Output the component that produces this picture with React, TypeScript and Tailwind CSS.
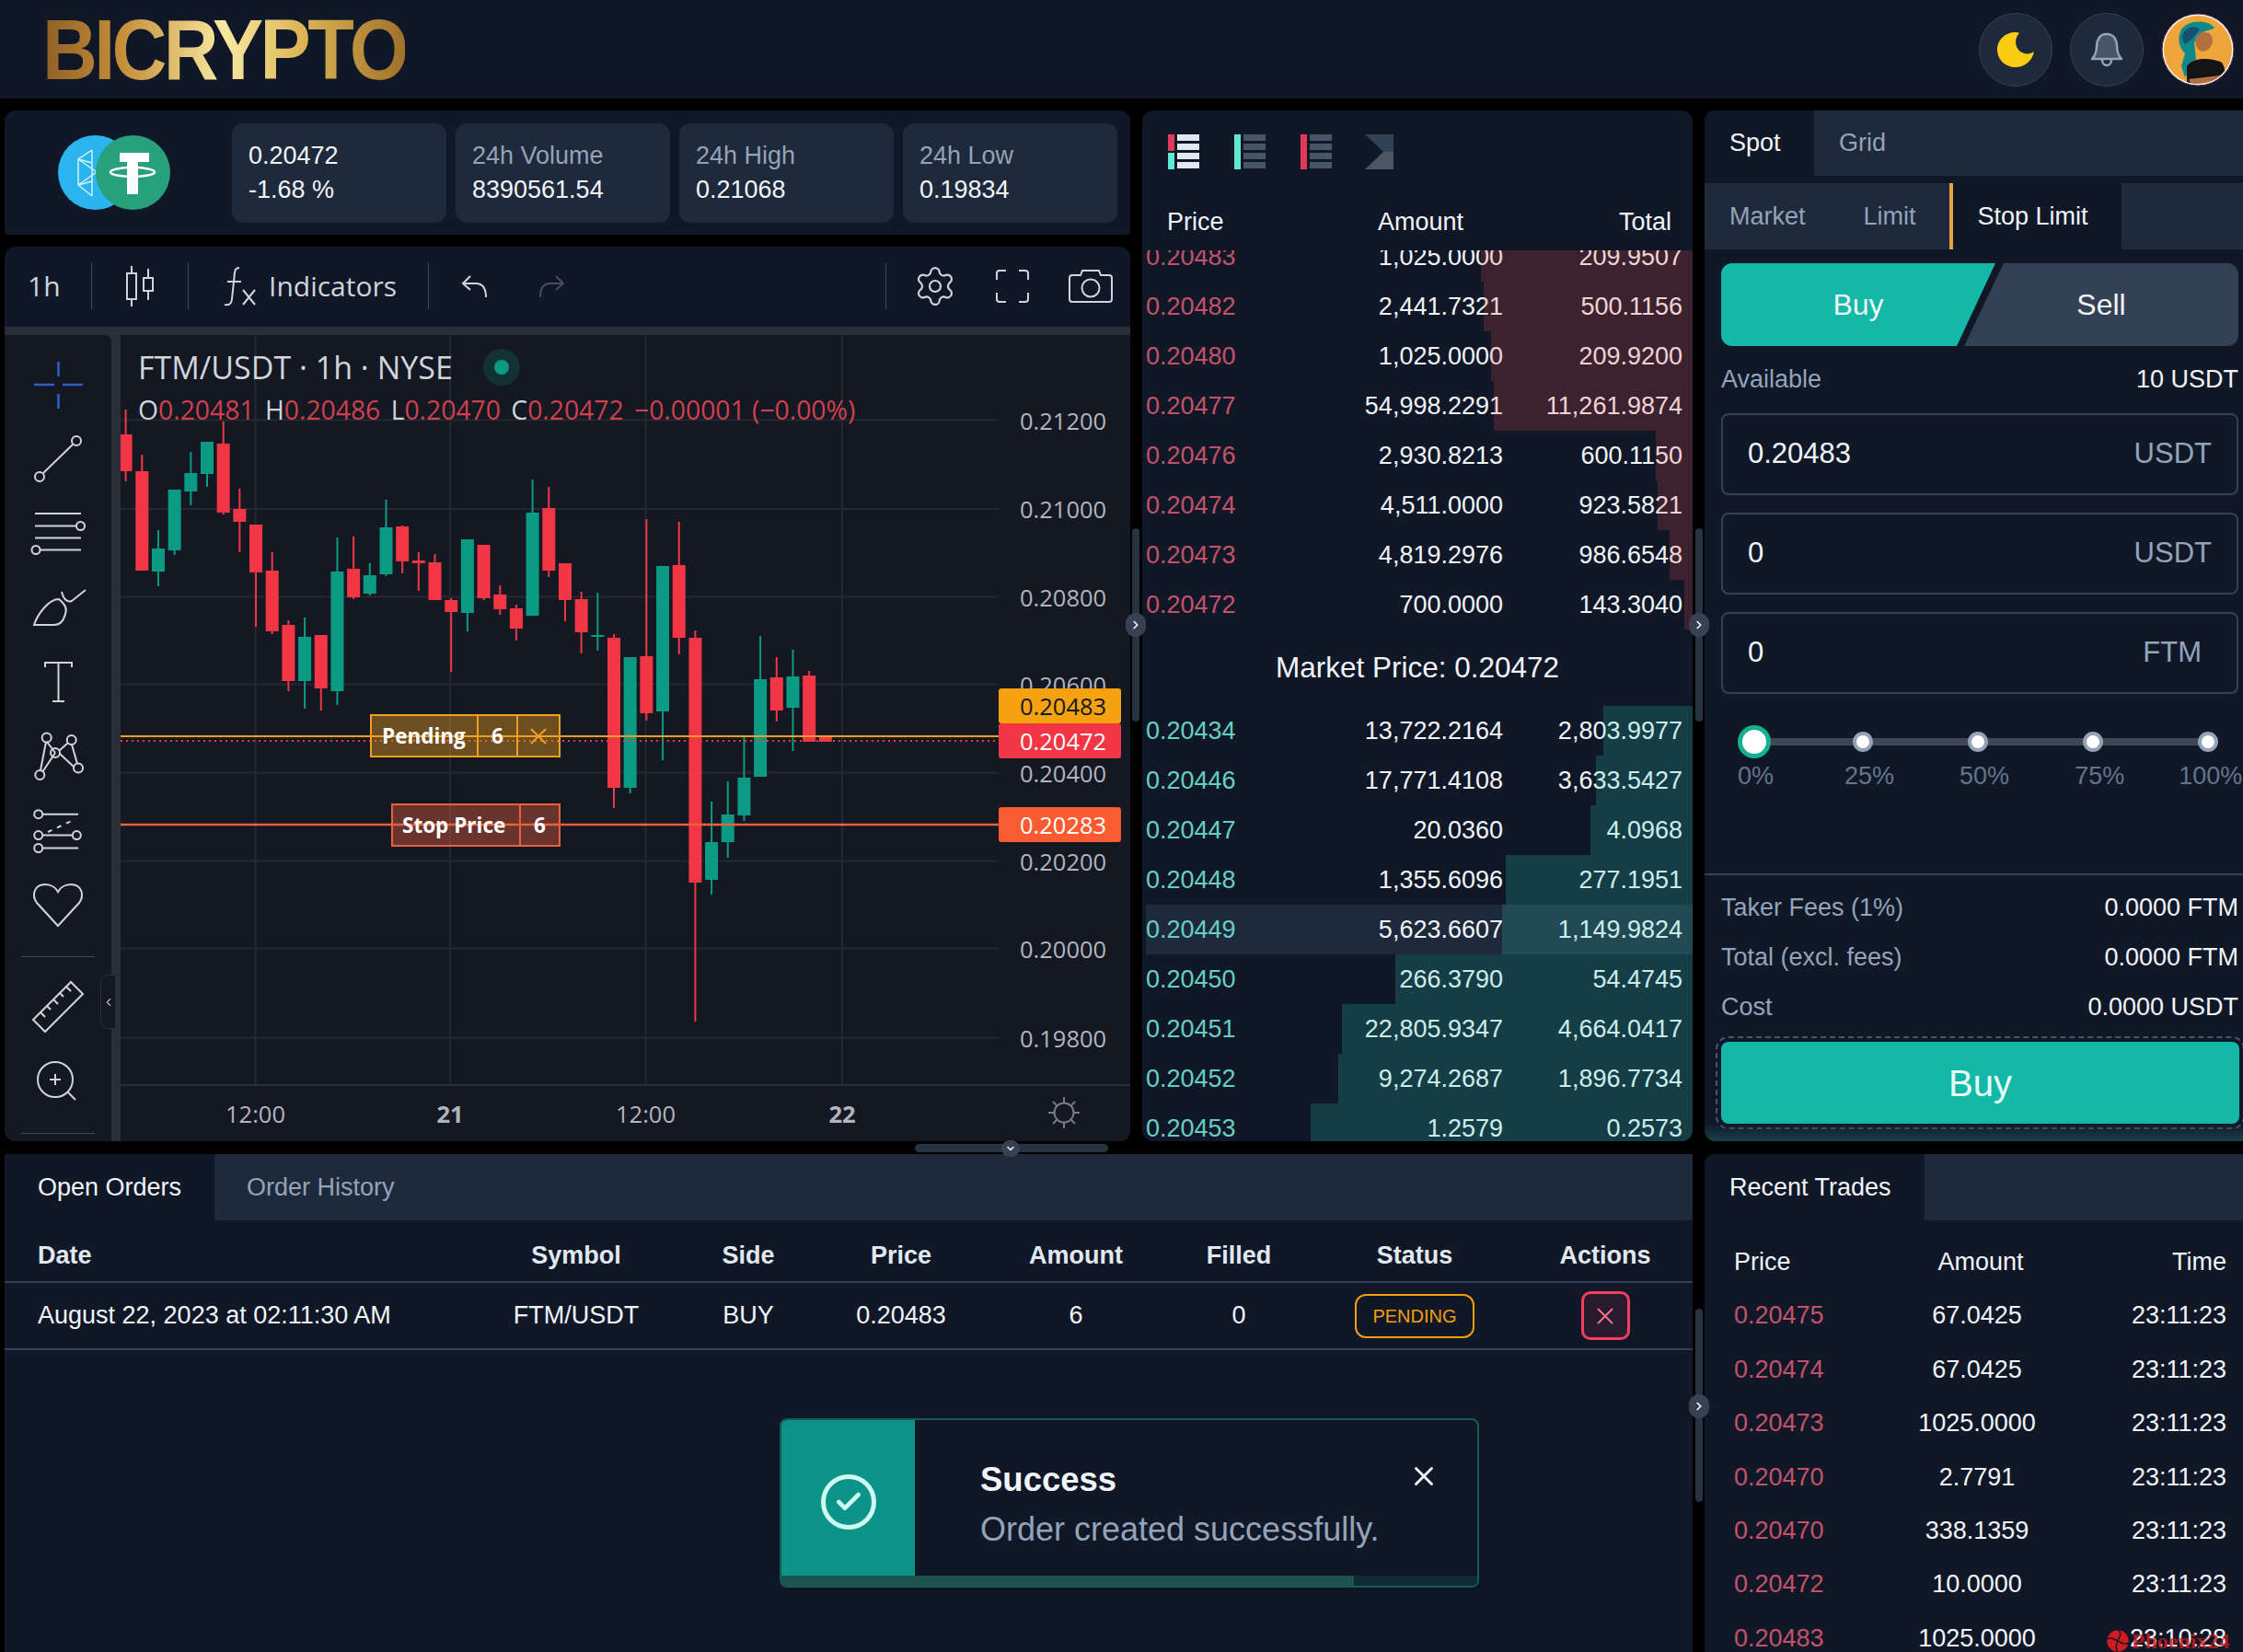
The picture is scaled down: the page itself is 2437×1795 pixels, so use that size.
import { Check, ChevronDown, ChevronLeft, ChevronRight, Settings, X } from "lucide-react";

const asks = [
  ["0.20483", "1,025.0000", "209.9507", 230],
  ["0.20482", "2,441.7321", "500.1156", 227],
  ["0.20480", "1,025.0000", "209.9200", 219],
  ["0.20477", "54,998.2291", "11,261.9874", 216],
  ["0.20476", "2,930.8213", "600.1150", 40],
  ["0.20474", "4,511.0000", "923.5821", 38],
  ["0.20473", "4,819.2976", "986.6548", 25],
  ["0.20472", "700.0000", "143.3040", 9],
] as const;

const bids = [
  ["0.20434", "13,722.2164", "2,803.9977", 97],
  ["0.20446", "17,771.4108", "3,633.5427", 105],
  ["0.20447", "20.0360", "4.0968", 111],
  ["0.20448", "1,355.6096", "277.1951", 203],
  ["0.20449", "5,623.6607", "1,149.9824", 207],
  ["0.20450", "266.3790", "54.4745", 323],
  ["0.20451", "22,805.9347", "4,664.0417", 381],
  ["0.20452", "9,274.2687", "1,896.7734", 385],
  ["0.20453", "1.2579", "0.2573", 415],
] as const;

const trades = [
  ["0.20475", "67.0425", "23:11:23"],
  ["0.20474", "67.0425", "23:11:23"],
  ["0.20473", "1025.0000", "23:11:23"],
  ["0.20470", "2.7791", "23:11:23"],
  ["0.20470", "338.1359", "23:11:23"],
  ["0.20472", "10.0000", "23:11:23"],
  ["0.20483", "1025.0000", "23:10:28"],
];

// up, wick top, body top, body bottom, wick bottom
const candles: [number, number, number, number, number][] = [
  [0, 445, 472, 512, 523], [0, 494, 512, 620, 620], [1, 576, 596, 621, 637], [1, 532, 532, 598, 603],
  [1, 491, 514, 534, 549], [1, 480, 480, 515, 529], [0, 458, 482, 557, 559], [0, 531, 553, 567, 600],
  [0, 570, 570, 622, 681], [0, 600, 620, 686, 689], [0, 674, 679, 740, 751], [1, 671, 692, 740, 770],
  [0, 690, 690, 748, 772], [1, 584, 621, 751, 766], [0, 583, 618, 649, 651], [1, 612, 625, 645, 647],
  [1, 543, 573, 624, 626], [0, 571, 572, 610, 623], [0, 600, 609, 612, 642], [0, 602, 611, 652, 652],
  [0, 650, 652, 665, 730], [1, 586, 586, 666, 686], [0, 592, 592, 650, 652], [0, 636, 646, 662, 668],
  [0, 657, 661, 683, 696], [1, 521, 557, 669, 669], [0, 529, 552, 620, 627], [0, 612, 612, 652, 675],
  [0, 643, 651, 687, 710], [1, 644, 690, 692, 707], [0, 689, 693, 856, 878], [1, 714, 714, 856, 862],
  [0, 564, 713, 775, 783], [1, 615, 615, 773, 826], [0, 567, 614, 693, 711], [0, 685, 693, 959, 1110],
  [1, 871, 915, 956, 972], [1, 849, 885, 915, 932], [1, 801, 845, 886, 892], [1, 691, 738, 844, 844],
  [0, 714, 736, 772, 784], [1, 706, 735, 769, 816], [0, 729, 734, 806, 806], [0, 800, 801, 806, 806],
];

const priceLevels = [
  ["0.21200", 456.5], ["0.21000", 553], ["0.20800", 648.5], ["0.20600", 743.6],
  ["0.20400", 839.5], ["0.20200", 935.5], ["0.20000", 1030.6], ["0.19800", 1127.5],
] as const;

const timeLabels = [["12:00", 277.5, false], ["21", 489, true], ["12:00", 701.5, false], ["22", 915, true]] as const;

const Chart = () => (
  <svg width="1097" height="876" viewBox="131 364 1097 876" className="block font-['Open_Sans',sans-serif]">
    {priceLevels.map(([, y]) => (
      <line key={y} x1="131" x2="1085" y1={y} y2={y} stroke="#242833" strokeWidth="2" />
    ))}
    {timeLabels.map(([, x]) => (
      <line key={x} x1={x} x2={x} y1="364" y2="1179" stroke="#242833" strokeWidth="2" />
    ))}
    {candles.map(([up, top, bodyTop, bodyBottom, bottom], i) => {
      const x = 136.6 + i * 17.68;
      const color = up ? "#0b9b84" : "#f23645";
      return (
        <g key={i} fill={color}>
          <rect x={x - 1} y={top} width="2" height={bottom - top} />
          <rect x={x - 7} y={bodyTop} width="14" height={Math.max(bodyBottom - bodyTop, 2)} />
        </g>
      );
    })}
    <line x1="131" x2="1085" y1="800" y2="800" stroke="#f0a01e" strokeWidth="2" />
    <line x1="131" x2="1085" y1="805" y2="805" stroke="#f23645" strokeWidth="2" strokeDasharray="2 4" />
    <line x1="131" x2="1085" y1="896" y2="896" stroke="#e8603c" strokeWidth="2.5" />
    {priceLevels.map(([label, y]) => (
      <text key={label} x="1108" y={y + 10} fontSize="25.5" fill="#b2b5be">{label}</text>
    ))}
    <rect x="1085" y="748" width="133" height="38" rx="3" fill="#f6a20f" />
    <text x="1108" y="777" fontSize="25.5" fill="#131722">0.20483</text>
    <rect x="1085" y="786" width="133" height="38" rx="3" fill="#f23645" />
    <text x="1108" y="815" fontSize="25.5" fill="#ffffff">0.20472</text>
    <rect x="1085" y="877" width="133" height="38" rx="3" fill="#fb5b31" />
    <text x="1108" y="906" fontSize="25.5" fill="#ffffff">0.20283</text>
    <line x1="131" x2="1228" y1="1179" y2="1179" stroke="#2a2e39" strokeWidth="2" />
    {timeLabels.map(([label, x, bold]) => (
      <text key={x} x={x} y="1219.5" textAnchor="middle" fontSize="25.5" fontWeight={bold ? 700 : 400} fill="#b2b5be">{label}</text>
    ))}
    <g stroke="#787b86" strokeWidth="2" fill="none">
      <circle cx="1156" cy="1209" r="10.5" />
      <path d="M1156 1192v6M1156 1220v6M1139 1209h6M1167 1209h6M1144 1197l4 4M1164 1217l4 4M1144 1221l4-4M1164 1201l4-4" />
    </g>
  </svg>
);

const ToolIcon = ({ children, className = "h-[81px]" }: { children: React.ReactNode; className?: string }) => (
  <div className={`flex items-center justify-center ${className}`}>
    <svg width="64" height="64" viewBox="0 0 64 64" fill="none" stroke="#d1d4dc" strokeWidth="2">
      {children}
    </svg>
  </div>
);

const LeftToolbar = () => (
  <div className="relative flex w-[116px] shrink-0 flex-col bg-[#141823] pt-[13px] rounded-tr-lg">
    <ToolIcon>
      <path d="M6 32H28M37 32H59M32.5 7V23M32.5 42V58" stroke="#2f5fc4" strokeWidth="2.5" />
    </ToolIcon>
    <ToolIcon>
      <path d="M16 47L48 16" />
      <circle cx="12" cy="51" r="5" />
      <circle cx="52" cy="12" r="5" />
    </ToolIcon>
    <ToolIcon>
      <path d="M7 10H57M7 23.5H52M7 36.5H57M13 49.5H57" />
      <circle cx="56.5" cy="23.5" r="4.5" />
      <circle cx="8" cy="49.5" r="4.5" />
    </ToolIcon>
    <ToolIcon>
      <path d="M6 50C10 38 22 22 33 22C40 28 42 32 40 38C38 46 34 50 28 50Z" />
      <path d="M36 14C38 22 42 26 47 24L62 12" />
    </ToolIcon>
    <ToolIcon>
      <path d="M18 15V10H47V15M32.5 10V52M26 52H39" />
    </ToolIcon>
    <ToolIcon>
      <path d="M20 15L29 27M19 15L13 46M29 27L15 48M33 25L43 16M47 18L53 39M34 28L49 42" />
      <circle cx="19.7" cy="10.5" r="5" />
      <circle cx="46.7" cy="13" r="5" />
      <circle cx="29" cy="27" r="5" />
      <circle cx="12.3" cy="51" r="5" />
      <circle cx="54" cy="43.5" r="5" />
    </ToolIcon>
    <ToolIcon>
      <path d="M15 12.7H54M15 35.6H48M15 49.5H54" />
      <path d="M21 32L51 18" strokeDasharray="5 6" />
      <circle cx="10.7" cy="12.7" r="4.5" />
      <circle cx="10.7" cy="35.6" r="4.5" />
      <circle cx="52.3" cy="35.6" r="4.5" />
      <circle cx="10.7" cy="49.5" r="4.5" />
    </ToolIcon>
    <ToolIcon>
      <path d="M32 53L9 28C3 20 6 8 18 8C25 8 30 12 32 16C34 12 39 8 46 8C58 8 61 20 55 28Z" />
    </ToolIcon>
    <div className="mx-[18px] mt-[14px] h-px bg-[#434651]" />
    <ToolIcon className="mt-[14px] h-[80px]">
      <path d="M5 46L46 5L59 18L18 59ZM13 38L18 43M20 31L24 35M27 24L32 29M34 17L38 21M41 10L46 15" />
    </ToolIcon>
    <ToolIcon className="h-[80px]">
      <circle cx="29" cy="31" r="19" />
      <path d="M42 44L51 53M23 31H35M29 25V37" />
    </ToolIcon>
    <div className="mx-[18px] mt-[17px] h-px bg-[#434651]" />
    <div className="absolute left-[104px] top-[695px] flex h-[59px] w-[16px] items-center justify-center rounded-l-lg border border-r-0 border-[#2a2e39] bg-[#141823]">
      <ChevronLeft size={14} color="#b2b5be" />
    </div>
  </div>
);

const ChartToolbar = () => (
  <div className="flex h-[87px] shrink-0 items-center pb-[2px] font-['Open_Sans',sans-serif] text-[#d1d4dc]">
    <span className="w-[94px] pl-[25px] text-[30px]">1h</span>
    <div className="h-[50px] w-px bg-[#434651]" />
    <div className="flex w-[104px] justify-center">
      <svg width="32" height="44" viewBox="0 0 32 44" fill="none" stroke="#d1d4dc" strokeWidth="2">
        <rect x="2" y="8" width="10" height="28" />
        <path d="M7 0V8M7 36V44M25 3V13M25 27V37" />
        <rect x="20" y="13" width="10" height="14" />
      </svg>
    </div>
    <div className="h-[50px] w-px bg-[#434651]" />
    <div className="flex w-[260px] items-center pl-[36px]">
      <svg width="38" height="44" viewBox="0 0 38 44" fill="none" stroke="#d1d4dc" strokeWidth="2">
        <path d="M19 2C14 2 14 6 13.500 12L11 36C10.500 41 8 43 3 42M6 17H21M23 26L36 42M36 26L23 42" />
      </svg>
      <span className="ml-[13px] text-[30px]">Indicators</span>
    </div>
    <div className="h-[50px] w-px bg-[#434651]" />
    <div className="flex w-[87px] justify-center pl-[12px]">
      <svg width="32" height="32" viewBox="0 0 32 32" fill="none" stroke="#d1d4dc" strokeWidth="2">
        <path d="M11 5L3 13L11 20M3 13H17C24 13 28 18 28 28" />
      </svg>
    </div>
    <div className="flex w-[91px] justify-center">
      <svg width="32" height="32" viewBox="0 0 32 32" fill="none" stroke="#4a4e5a" strokeWidth="2">
        <path d="M21 5L29 13L21 20M29 13H15C8 13 4 18 4 28" />
      </svg>
    </div>
    <div className="ml-[318px] h-[50px] w-px bg-[#434651]" />
    <Settings size={48} strokeWidth={1.1} color="#d1d4dc" className="ml-[29px]" />
    <svg width="38" height="38" viewBox="0 0 38 38" fill="none" stroke="#d1d4dc" strokeWidth="2" className="ml-[41px]">
      <path d="M12 2H5C3 2 2 3 2 5V12M26 2H33C35 2 36 3 36 5V12M36 26V33C36 35 35 36 33 36H26M12 36H5C3 36 2 35 2 33V26" />
    </svg>
    <svg width="48" height="38" viewBox="0 0 48 38" fill="none" stroke="#d1d4dc" strokeWidth="2" className="ml-[42px]">
      <path d="M4 7H13L15 2H33L35 7H44C46 7 47 8 47 10V33C47 35 46 36 44 36H4C2 36 1 35 1 33V10C1 8 2 7 4 7Z" />
      <circle cx="24" cy="21" r="9.500" />
    </svg>
  </div>
);

const TickerCard = ({ label, value, muted }: { label: string; value: string; muted?: boolean }) => (
  <div className="flex h-[108px] w-[233px] flex-col justify-center rounded-xl bg-[#1e293b] pl-[18px] text-[27px] leading-[37px]">
    <span className={muted ? "text-[#94a3b8]" : "text-[#f1f5f9]"}>{label}</span>
    <span className="text-[#f1f5f9]">{value}</span>
  </div>
);

const Ticker = () => (
  <div className="flex h-[135px] shrink-0 items-center rounded-t-xl rounded-b-sm bg-[#101828]">
    <svg width="122" height="81" viewBox="0 0 122 81" className="ml-[58px] mr-[67px] shrink-0">
      <circle cx="40.500" cy="40.500" r="40.500" fill="#2bb5ee" />
      <path d="M37 16L22 26V54L37 66M22 26L42 40M22 54L42 40M37 16V66M22 26L37 30M22 54L37 50" stroke="#d7f1fb" strokeWidth="1.500" fill="none" />
      <circle cx="81.500" cy="40.500" r="40.500" fill="#26a17b" />
      <path d="M67 19H99V29H87V64H75V29H67Z" fill="#ffffff" />
      <ellipse cx="81" cy="40" rx="24" ry="5" fill="none" stroke="#ffffff" strokeWidth="2.500" />
    </svg>
    <div className="flex gap-[10px]">
      <TickerCard label="0.20472" value="-1.68 %" />
      <TickerCard label="24h Volume" value="8390561.54" muted />
      <TickerCard label="24h High" value="0.21068" muted />
      <TickerCard label="24h Low" value="0.19834" muted />
    </div>
  </div>
);

const ChartPanel = () => (
  <div className="mt-[13px] flex flex-1 flex-col overflow-hidden rounded-xl rounded-b-xl bg-[#101828]">
    <ChartToolbar />
    <div className="h-[9px] shrink-0 bg-[#2a2e39]" />
    <div className="flex flex-1 bg-[#2a2e39]">
      <LeftToolbar />
      <div className="relative ml-[10px] flex-1 bg-[#141823]">
        <Chart />
        <div className="absolute left-[19px] top-[13px] flex items-center font-['Open_Sans',sans-serif]">
          <span className="text-[34px] leading-[44px] text-[#d1d4dc]">FTM/USDT · 1h · NYSE</span>
          <span className="ml-[33px] flex h-[40px] w-[40px] items-center justify-center rounded-full bg-[#0b9b84]/20">
            <span className="h-[16px] w-[16px] rounded-full bg-[#0b9b84]" />
          </span>
        </div>
        <div className="absolute left-[19px] top-[62px] whitespace-nowrap font-['Open_Sans',sans-serif] text-[28.300px] leading-[38px] text-[#d0404e]">
          <span className="text-[#d1d4dc]">O</span>0.20481 <span className="ml-1 text-[#d1d4dc]">H</span>0.20486 <span className="ml-1 text-[#d1d4dc]">L</span>0.20470 <span className="ml-1 text-[#d1d4dc]">C</span>0.20472 <span className="ml-1">−0.00001 (−0.00%)</span>
        </div>
        <div className="absolute left-[271px] top-[412px] flex h-[47px] w-[207px] items-center border-2 border-[#f0a01e] bg-[#f0a01e]/40 font-['Open_Sans',sans-serif] text-[22.500px] font-bold text-white">
          <span className="w-[114px] pl-[11px]">Pending</span>
          <span className="flex h-full w-[45px] items-center justify-center border-x-2 border-[#f0a01e]">6</span>
          <span className="flex flex-1 items-center justify-center">
            <X size={30} strokeWidth={1.6} color="#f0a01e" />
          </span>
        </div>
        <div className="absolute left-[294px] top-[509px] flex h-[47px] w-[184px] items-center border-2 border-[#e8603c] bg-[#e8603c]/40 font-['Open_Sans',sans-serif] text-[22.500px] font-bold text-white">
          <span className="w-[137px] pl-[10px]">Stop Price</span>
          <span className="flex h-full flex-1 items-center justify-center border-l-2 border-[#e8603c]">6</span>
        </div>
      </div>
    </div>
  </div>
);

const BookRow = ({ row, side, active }: { row: readonly [string, string, string, number]; side: "ask" | "bid"; active?: boolean }) => (
  <div className={`relative ml-[4px] grid h-[54px] shrink-0 grid-cols-[200px_188px_195px] items-center text-[27px] text-[#f1f5f9] ${active ? "bg-[#1e293b]" : ""}`}>
    <span className={side === "ask" ? "text-[#c2526a]" : "text-[#66cfc1]"}>{row[0]}</span>
    <span className="text-right">{row[1]}</span>
    <span className="text-right">{row[2]}</span>
    <div
      className={`absolute inset-y-0 right-0 ${side === "ask" ? "bg-[#ef4444]/20" : "bg-[#2dd4bf]/20"}`}
      style={{ width: row[3] }}
    />
  </div>
);

const BookIcon = ({ bar, lines }: { bar: "both" | "green" | "red"; lines: string }) => (
  <svg width="34" height="38" viewBox="0 0 34 38">
    {bar === "both" ? (
      <>
        <rect width="7" height="18" fill="#e0395a" />
        <rect y="20" width="7" height="18" fill="#5eead4" />
      </>
    ) : (
      <rect width="7" height="38" fill={bar === "green" ? "#5eead4" : "#e0395a"} />
    )}
    {[0, 10, 20, 30].map((y) => (
      <rect key={y} x="10" y={y} width="24" height="7" fill={lines} />
    ))}
  </svg>
);

const OrderBook = () => (
  <div className="ml-[13px] flex w-[598px] shrink-0 flex-col overflow-hidden rounded-xl bg-[#101828]">
    <div className="flex h-[90px] shrink-0 items-center pl-[28px]">
      <BookIcon bar="both" lines="#e2e8f0" />
      <div className="ml-[38px]"><BookIcon bar="green" lines="#475569" /></div>
      <div className="ml-[38px]"><BookIcon bar="red" lines="#475569" /></div>
      <svg width="31" height="38" viewBox="0 0 31 38" className="ml-[36px]">
        <path d="M0 0H31V19H20Z" fill="#334155" />
        <path d="M20 19H31V38H0Z" fill="#4b5563" />
      </svg>
    </div>
    <div className="grid h-[62px] shrink-0 grid-cols-[229px_120px_199px] items-center pl-[27px] text-[27px] text-[#f1f5f9]">
      <span>Price</span>
      <span>Amount</span>
      <span className="text-right">Total</span>
    </div>
    <div className="flex h-[412px] shrink-0 flex-col justify-end overflow-hidden">
      {asks.map((row) => <BookRow key={row[0]} row={row} side="ask" />)}
    </div>
    <div className="flex h-[83px] shrink-0 items-center justify-center text-[31.500px] text-[#f1f5f9]">Market Price: 0.20472</div>
    <div className="flex min-h-0 flex-1 flex-col overflow-hidden">
      {bids.map((row) => <BookRow key={row[0]} row={row} side="bid" active={row[0] === "0.20449"} />)}
    </div>
  </div>
);

const Field = ({ value, unit, unitClass = "" }: { value: string; unit: string; unitClass?: string }) => (
  <div className="flex h-[89px] items-center justify-between rounded-lg border-2 border-[#334155] px-[27px] text-[31px]">
    <span className="text-[#f1f5f9]">{value}</span>
    <span className={`text-[#94a3b8] ${unitClass}`}>{unit}</span>
  </div>
);

const TradeForm = () => (
  <div className="ml-[13px] flex flex-1 flex-col overflow-hidden rounded-tl-xl rounded-bl-xl bg-[#101828] text-[27px]">
    <div className="flex h-[71px] shrink-0 bg-[#1e293b]">
      <div className="flex w-[119px] items-center rounded-tl-xl bg-[#101828] pl-[27px] text-[#f1f5f9]">Spot</div>
      <div className="flex items-center pl-[27px] text-[#94a3b8]">Grid</div>
    </div>
    <div className="mt-[8px] flex h-[72px] shrink-0 items-center bg-[#1e293b] text-[#94a3b8]">
      <span className="pl-[27px]">Market</span>
      <span className="pl-[63px]">Limit</span>
      <div className="ml-[36px] flex h-full w-[187px] items-center border-l-4 border-[#e8a33d] bg-[#101828] pl-[27px] text-[#f1f5f9]">Stop Limit</div>
    </div>
    <div className="ml-[18px] mr-[5px] mt-[15px] flex h-[90px] shrink-0 text-[32px] text-[#f1f5f9]">
      <div className="flex w-[298px] shrink-0 items-center justify-center rounded-l-xl bg-[#14b8a6] [clip-path:polygon(0_0,100%_0,calc(100%-42px)_100%,0_100%)]">Buy</div>
      <div className="-ml-[34px] flex flex-1 items-center justify-center rounded-r-xl bg-[#334155] [clip-path:polygon(43px_0,100%_0,100%_100%,0_100%)]">Sell</div>
    </div>
    <div className="ml-[18px] mr-[5px] mt-[18px] flex h-[37px] shrink-0 items-center justify-between">
      <span className="text-[#94a3b8]">Available</span>
      <span className="text-[#f1f5f9]">10 USDT</span>
    </div>
    <div className="ml-[18px] mr-[5px] mt-[18px] flex shrink-0 flex-col gap-[19px]">
      <Field value="0.20483" unit="USDT" />
      <Field value="0" unit="USDT" />
      <Field value="0" unit="FTM" unitClass="mr-[11px]" />
    </div>
    <div className="relative ml-[36px] mt-[34px] flex h-[36px] w-[522px] shrink-0 items-center">
      <div className="absolute inset-x-[18px] top-[14px] h-[8px] bg-[#3f4654]" />
      <span className="relative h-[36px] w-[36px] rounded-full border-[5px] border-[#14b08f] bg-white" />
      <span className="relative ml-[89px] h-[22px] w-[22px] rounded-full border-[4px] border-[#94a3b8] bg-white" />
      <span className="relative ml-[103px] h-[22px] w-[22px] rounded-full border-[4px] border-[#94a3b8] bg-white" />
      <span className="relative ml-[103px] h-[22px] w-[22px] rounded-full border-[4px] border-[#94a3b8] bg-white" />
      <span className="relative ml-[103px] h-[22px] w-[22px] rounded-full border-[4px] border-[#94a3b8] bg-white" />
    </div>
    <div className="ml-[36px] mt-[3px] flex h-[32px] shrink-0 items-center whitespace-nowrap text-[#64748b]">
      <span>0%</span>
      <span className="ml-[77px]">25%</span>
      <span className="ml-[71px]">50%</span>
      <span className="ml-[71px]">75%</span>
      <span className="ml-[59px]">100%</span>
    </div>
    <div className="mt-[90px] h-[2px] shrink-0 bg-[#334155]" />
    <div className="ml-[18px] mr-[5px] mt-[8px] shrink-0">
      <div className="flex h-[54px] items-center justify-between">
        <span className="text-[#94a3b8]">Taker Fees (1%)</span>
        <span className="text-[#f1f5f9]">0.0000 FTM</span>
      </div>
      <div className="flex h-[54px] items-center justify-between">
        <span className="text-[#94a3b8]">Total (excl. fees)</span>
        <span className="text-[#f1f5f9]">0.0000 FTM</span>
      </div>
      <div className="flex h-[54px] items-center justify-between">
        <span className="text-[#94a3b8]">Cost</span>
        <span className="text-[#f1f5f9]">0.0000 USDT</span>
      </div>
    </div>
    <div className="ml-[18px] mr-[4px] mt-[11px] flex h-[89px] shrink-0 items-center justify-center rounded-lg bg-[#14b8a6] text-[40px] text-[#e6fffa] outline-2 outline-offset-[4px] outline-[#475569] outline-dashed">Buy</div>
    <div className="min-h-0 flex-1 bg-gradient-to-b from-transparent to-[#1c3f48]" />
  </div>
);

const Tab = ({ label, active, className }: { label: string; active?: boolean; className: string }) => (
  <div className={`flex items-center ${active ? "bg-[#101828] text-[#f1f5f9]" : "text-[#94a3b8]"} ${className}`}>{label}</div>
);

const OrdersPanel = () => (
  <div className="relative w-[1834px] shrink-0 bg-[#101828] text-[27px]">
    <div className="flex h-[72px] bg-[#1e293b]">
      <Tab label="Open Orders" active className="w-[228px] pl-[36px]" />
      <Tab label="Order History" className="pl-[35px]" />
    </div>
    <div className="grid h-[68px] grid-cols-[516px_210px_164px_168px_212px_142px_240px_174px] items-center border-b-2 border-[#334155] pt-[11px] text-center font-bold text-[#e2e8f0]">
      <span className="pl-[36px] text-left">Date</span>
      <span>Symbol</span>
      <span>Side</span>
      <span>Price</span>
      <span>Amount</span>
      <span>Filled</span>
      <span>Status</span>
      <span>Actions</span>
    </div>
    <div className="grid h-[73px] grid-cols-[516px_210px_164px_168px_212px_142px_240px_174px] items-center border-b-2 border-[#334155] text-center text-[#f1f5f9]">
      <span className="pl-[36px] text-left">August 22, 2023 at 02:11:30 AM</span>
      <span>FTM/USDT</span>
      <span>BUY</span>
      <span>0.20483</span>
      <span>6</span>
      <span>0</span>
      <span className="flex justify-center">
        <span className="flex h-[48px] w-[130px] items-center justify-center rounded-xl border-2 border-[#f59e0b] text-[20px] text-[#f59e0b]">PENDING</span>
      </span>
      <span className="flex justify-center">
        <span className="flex h-[53px] w-[53px] items-center justify-center rounded-[10px] border-[3px] border-[#f43f5e] bg-[#f43f5e]/10">
          <X size={30} strokeWidth={1.6} className="text-[#f87189]" />
        </span>
      </span>
    </div>
    <div className="absolute left-[842px] top-[287px] flex h-[184px] w-[760px] flex-col overflow-hidden rounded-lg border-2 border-[#165a58] bg-[#101828] shadow-lg">
      <div className="flex flex-1">
        <div className="flex w-[145px] items-center justify-center bg-[#0d9488] pt-[8px]">
          <span className="flex h-[60px] w-[60px] items-center justify-center rounded-full border-[5px] border-[#ccfbf1]">
            <Check size={32} strokeWidth={3.5} className="text-[#ccfbf1]" />
          </span>
        </div>
        <div className="relative flex-1 pl-[71px] pt-[39px]">
          <div className="text-[36.500px] font-bold leading-[52px] text-[#f1f5f9]">Success</div>
          <div className="mt-[2px] text-[36px] leading-[52px] text-[#94a3b8]">Order created successfully.</div>
          <X size={34} strokeWidth={2} className="absolute right-[41px] top-[44px] text-[#f1f5f9]" />
        </div>
      </div>
      <div className="h-[11px] shrink-0 bg-[#0f2a33]">
        <div className="h-full w-[622px] bg-[#1d544f]" />
      </div>
    </div>
  </div>
);

const TradesPanel = () => (
  <div className="relative ml-[13px] flex-1 overflow-hidden rounded-tl-xl bg-[#101828] text-[27px]">
    <div className="flex h-[72px] bg-[#1e293b]">
      <Tab label="Recent Trades" active className="w-[239px] rounded-tl-xl pl-[27px]" />
    </div>
    <div className="mt-[16px] pl-[32px]">
      <div className="grid h-[58.400px] grid-cols-[116px_296px_123px] items-center text-[#f1f5f9]">
        <span>Price</span>
        <span className="pl-[8px] text-center">Amount</span>
        <span className="text-right">Time</span>
      </div>
      {trades.map((t, i) => (
        <div key={i} className="grid h-[58.400px] grid-cols-[116px_296px_123px] items-center whitespace-nowrap text-[#f1f5f9]">
          <span className="text-[#c2526a]">{t[0]}</span>
          <span className="text-center">{t[1]}</span>
          <span className="text-right">{t[2]}</span>
        </div>
      ))}
    </div>
    <div className="absolute left-[436px] top-[511px] flex items-center text-[#d01c1f]">
      <svg width="26" height="26" viewBox="0 0 26 26" fill="currentColor" stroke="#101828" strokeWidth="1.500">
        <circle cx="13" cy="13" r="12.500" />
        <path d="M13 1C22 7 6 14 13 25M1 11C9 6 17 20 25 15" fill="none" />
      </svg>
      <span className="ml-[2px] font-['Liberation_Serif',serif] text-[24px] font-bold opacity-80">Phoenix24</span>
    </div>
  </div>
);

const Header = () => (
  <div className="flex h-[107px] shrink-0 items-center justify-between bg-[#101828] pl-[46px] pr-[9px]">
    <div className="origin-left scale-x-[.9] bg-[linear-gradient(90deg,#8f5f26,#c48f3a_22%,#f8e9a2_50%,#dcb455_72%,#a0712a_100%)] bg-clip-text text-[92px] font-bold leading-[92px] tracking-[-4px] text-transparent">
      BICRYPTO
    </div>
    <div className="flex items-center gap-[19px]">
      <div className="flex h-[80px] w-[80px] items-center justify-center rounded-full border border-[#334155] bg-[#1e293b]">
        <svg width="40" height="38" viewBox="0 0 40 38">
          <path d="M20 0C9 0 0 8 0 19C0 30 9 38 20 38C30 38 38 31 40 21C35 25 27 24 23 19C19 14 19 6 24 1C22 0 21 0 20 0Z" fill="#facc15" />
        </svg>
      </div>
      <div className="flex h-[80px] w-[80px] items-center justify-center rounded-full border border-[#334155] bg-[#1e293b]">
        <svg width="36" height="38" viewBox="0 0 36 38">
          <path d="M18 2C10 2 7 9 7 15C7 22 5 26 2 29H34C31 26 29 22 29 15C29 9 26 2 18 2Z" fill="#475569" stroke="#94a3b8" strokeWidth="2.500" strokeLinejoin="round" />
          <path d="M13 30C13 38 23 38 23 30" fill="none" stroke="#94a3b8" strokeWidth="2.500" />
        </svg>
      </div>
      <svg width="80" height="80" viewBox="0 0 80 80">
        <clipPath id="avatar"><circle cx="40" cy="40" r="37" /></clipPath>
        <circle cx="40" cy="40" r="39" fill="#fff4ea" stroke="#5a2a50" strokeWidth="1" />
        <g clipPath="url(#avatar)">
          <rect width="80" height="80" fill="#eea53c" />
          <path d="M22 18C28 8 50 6 58 16C54 20 46 18 42 24L36 32L38 50L26 70L22 58L26 44C18 36 18 26 22 18Z" fill="#0f8a8a" />
          <path d="M24 22C28 15 38 13 42 18L34 28L26 34C23 30 22 26 24 22Z" fill="#164f73" />
          <path d="M38 26C44 18 56 20 56 30C56 38 48 44 42 41C38 38 36 32 38 26Z" fill="#b0703f" />
          <path d="M28 58C34 48 54 48 66 54C70 60 70 66 68 72L28 78Z" fill="#141414" />
          <path d="M30 72L64 68L62 80H34Z" fill="#b0703f" />
        </g>
      </svg>
    </div>
  </div>
);

const VHandle = ({ left, top, center }: { left: string; top: string; center: string }) => (
  <div className={`absolute h-[210px] w-[8px] rounded-full bg-[#263340] ${left} ${top}`}>
    <div className={`absolute -left-[7px] flex h-[26px] w-[22px] items-center justify-center rounded-full bg-[#374151] ${center}`}>
      <ChevronRight size={14} strokeWidth={3} className="text-[#f1f5f9]" />
    </div>
  </div>
);

export default function App() {
  return (
    <div className="relative flex h-[1795px] w-[2437px] flex-col overflow-hidden bg-black font-['Liberation_Sans',Arial,sans-serif]">
      <Header />
      <div className="mt-[13px] flex h-[1120px] shrink-0 pl-[5px]">
        <div className="flex w-[1223px] shrink-0 flex-col">
          <Ticker />
          <ChartPanel />
        </div>
        <OrderBook />
        <TradeForm />
      </div>
      <div className="mt-[14px] flex min-h-0 flex-1 pl-[5px]">
        <OrdersPanel />
        <TradesPanel />
      </div>
      <VHandle left="left-[1230px]" top="top-[574px]" center="top-[92px]" />
      <VHandle left="left-[1842px]" top="top-[574px]" center="top-[92px]" />
      <VHandle left="left-[1842px]" top="top-[1422px]" center="top-[93px]" />
      <div className="absolute left-[994px] top-[1243px] h-[9px] w-[210px] rounded-full bg-[#263340]">
        <div className="absolute left-[94px] -top-[4px] flex h-[18px] w-[20px] items-center justify-center rounded-full bg-[#374151]">
          <ChevronDown size={12} strokeWidth={3} className="text-[#f1f5f9]" />
        </div>
      </div>
    </div>
  );
}
